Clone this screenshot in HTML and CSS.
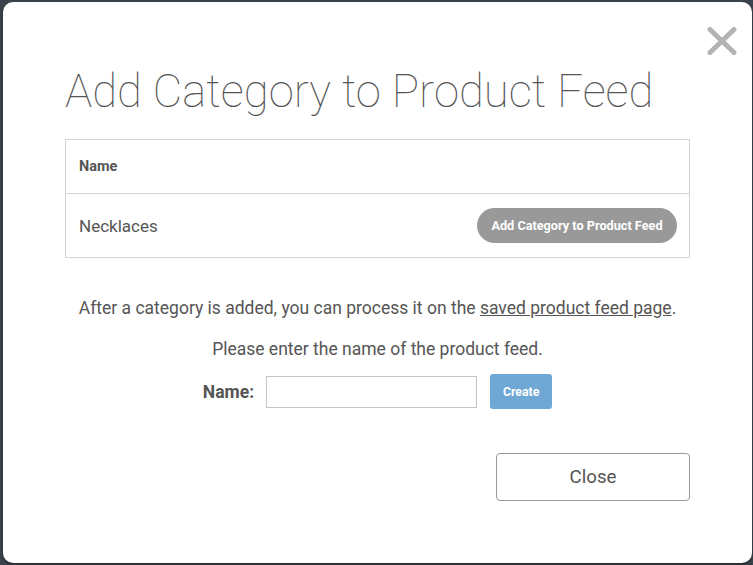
FILE: index.html
```html
<!DOCTYPE html>
<html>
<head>
<meta charset="utf-8">
<link rel="stylesheet" href="styles.css">
</head>
<body>
<div class="modal">
  <button class="x-btn" aria-label="close">
    <svg width="30" height="28" viewBox="0 0 30 28"><path d="M3 2.5 L27 25.5 M27 2.5 L3 25.5" stroke="#b3b3b3" stroke-width="5" stroke-linecap="round" fill="none"/></svg>
  </button>
  <h1 class="title">Add Category to Product Feed</h1>
  <div class="table">
    <div class="thead">Name</div>
    <div class="trow">
      <span class="cat">Necklaces</span>
      <button class="pill">Add Category to Product Feed</button>
    </div>
  </div>
  <p class="info">After a category is added, you can process it on the <a href="#">saved product feed page</a>.</p>
  <p class="info2">Please enter the name of the product feed.</p>
  <div class="name-row">
    <label class="lbl">Name:</label>
    <input class="inp" type="text">
    <button class="create">Create</button>
  </div>
  <div class="footer">
    <button class="close">Close</button>
  </div>
</div>
</body>
</html>
```
FILE: styles.css
```css
html, body {
  margin: 0;
  padding: 0;
  height: 565px;
  overflow: hidden;
  background: #39424a;
  font-family: Roboto, "Liberation Sans", sans-serif;
  color: #555;
}
.modal {
  position: relative;
  box-sizing: border-box;
  margin: 2px 1px 0 3px;
  height: 561px;
  background: #fff;
  border-radius: 10px;
  padding: 62px 62px 0 62px;
  box-shadow: 0 2px 3px rgba(0,0,0,0.35);
}
.x-btn {
  position: absolute;
  top: 25px;
  right: 15px;
  width: 30px;
  height: 28px;
  padding: 0;
  border: 0;
  background: none;
}
.x-btn svg { display: block; }
.title {
  margin: 0 0 20px 0;
  font-weight: 100;
  font-size: 45.5px;
  line-height: 55px;
  color: #555;
}
.table {
  border: 1px solid #d3d3d3;
}
.thead {
  height: 53px;
  border-bottom: 1px solid #d3d3d3;
  display: flex;
  align-items: center;
  padding-left: 13px;
  font-size: 14.5px;
  font-weight: 700;
  color: #555;
}
.trow {
  height: 63px;
  display: flex;
  align-items: center;
  justify-content: space-between;
  padding: 0 12px 0 13px;
}
.cat {
  font-size: 17px;
  color: #555;
}
.pill {
  height: 35px;
  width: 200px;
  border: 0;
  border-radius: 18px;
  background: #999;
  color: #fff;
  font-family: Roboto, "Liberation Sans", sans-serif;
  font-size: 12.7px;
  font-weight: 700;
  padding: 0;
}
.info {
  margin: 39px 0 0 0;
  text-align: center;
  font-size: 17.5px;
  line-height: 22px;
}
.info a {
  color: #555;
  text-decoration: underline;
}
.info2 {
  margin: 19px 0 0 0;
  text-align: center;
  font-size: 17.5px;
  line-height: 22px;
}
.name-row {
  margin-top: 14px;
  display: flex;
  justify-content: center;
  align-items: center;
  height: 35px;
}
.lbl {
  font-size: 17.5px;
  font-weight: 700;
  margin-right: 12px;
  color: #555;
}
.inp {
  box-sizing: border-box;
  width: 211px;
  height: 32px;
  border: 1px solid #c4c4c4;
  margin: 0 13px 0 0;
  padding: 0 6px;
}
.create {
  width: 62px;
  height: 35px;
  border: 0;
  border-radius: 3px;
  background: #6fa7d5;
  color: #fff;
  font-family: Roboto, "Liberation Sans", sans-serif;
  font-size: 12.3px;
  font-weight: 700;
  padding: 0;
}
.footer {
  margin-top: 44px;
  display: flex;
  justify-content: flex-end;
}
.close {
  width: 194px;
  height: 48px;
  border: 1px solid #999;
  border-radius: 4px;
  background: #fff;
  color: #555;
  font-family: Roboto, "Liberation Sans", sans-serif;
  font-size: 18.7px;
  padding: 0;
}
```
